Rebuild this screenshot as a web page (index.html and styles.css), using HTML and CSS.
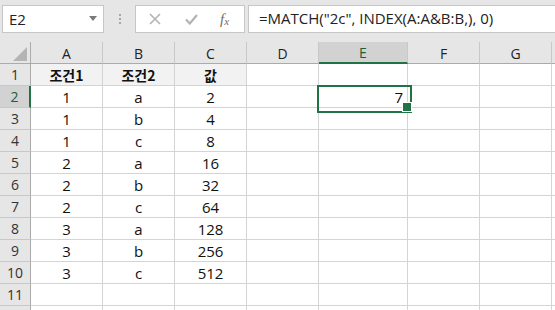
FILE: index.html
```html
<!DOCTYPE html>
<html lang="ko">
<head>
<meta charset="utf-8">
<link rel="stylesheet" href="styles.css">
</head>
<body>
<div class="app">
  <div class="toolbar">
    <div class="namebox">
      <span class="name">E2</span>
      <svg class="caret" width="8" height="5" viewBox="0 0 8 5"><path d="M0 0H8L4 5Z" fill="#7a7a7a"/></svg>
    </div>
    <div class="grip"><i></i><i></i><i></i></div>
    <div class="fxbox">
      <svg class="ico" width="12" height="12" viewBox="0 0 12 12"><path d="M1 1L11 11M11 1L1 11" stroke="#b3b3b3" stroke-width="1.6" fill="none"/></svg>
      <svg class="ico" width="13" height="11" viewBox="0 0 13 11"><path d="M1 5.5L4.8 9.5L12 1" stroke="#b3b3b3" stroke-width="2.2" fill="none"/></svg>
      <span class="fx">f<sub>x</sub></span>
    </div>
    <div class="formula">=MATCH("2c", INDEX(A:A&amp;B:B,), 0)</div>
  </div>
  <div class="sheet">
    <div class="corner"><svg width="14" height="14" viewBox="0 0 14 14"><path d="M14 0V14H0Z" fill="#b4b4b4"/></svg></div>
    <div class="ch">A</div><div class="ch">B</div><div class="ch">C</div><div class="ch">D</div><div class="ch sel">E</div><div class="ch">F</div><div class="ch">G</div><div class="ch"></div>

    <div class="rh">1</div><div class="c hd">조건1</div><div class="c hd">조건2</div><div class="c hd">값</div><div class="c"></div><div class="c"></div><div class="c"></div><div class="c"></div><div class="c"></div>
    <div class="rh sel">2</div><div class="c">1</div><div class="c">a</div><div class="c">2</div><div class="c"></div><div class="c act"><span class="num">7</span></div><div class="c"></div><div class="c"></div><div class="c"></div>
    <div class="rh">3</div><div class="c">1</div><div class="c">b</div><div class="c">4</div><div class="c"></div><div class="c"></div><div class="c"></div><div class="c"></div><div class="c"></div>
    <div class="rh">4</div><div class="c">1</div><div class="c">c</div><div class="c">8</div><div class="c"></div><div class="c"></div><div class="c"></div><div class="c"></div><div class="c"></div>
    <div class="rh">5</div><div class="c">2</div><div class="c">a</div><div class="c">16</div><div class="c"></div><div class="c"></div><div class="c"></div><div class="c"></div><div class="c"></div>
    <div class="rh">6</div><div class="c">2</div><div class="c">b</div><div class="c">32</div><div class="c"></div><div class="c"></div><div class="c"></div><div class="c"></div><div class="c"></div>
    <div class="rh">7</div><div class="c">2</div><div class="c">c</div><div class="c">64</div><div class="c"></div><div class="c"></div><div class="c"></div><div class="c"></div><div class="c"></div>
    <div class="rh">8</div><div class="c">3</div><div class="c">a</div><div class="c">128</div><div class="c"></div><div class="c"></div><div class="c"></div><div class="c"></div><div class="c"></div>
    <div class="rh">9</div><div class="c">3</div><div class="c">b</div><div class="c">256</div><div class="c"></div><div class="c"></div><div class="c"></div><div class="c"></div><div class="c"></div>
    <div class="rh">10</div><div class="c">3</div><div class="c">c</div><div class="c">512</div><div class="c"></div><div class="c"></div><div class="c"></div><div class="c"></div><div class="c"></div>
    <div class="rh">11</div><div class="c"></div><div class="c"></div><div class="c"></div><div class="c"></div><div class="c"></div><div class="c"></div><div class="c"></div><div class="c"></div>
    <div class="rh"></div><div class="c"></div><div class="c"></div><div class="c"></div><div class="c"></div><div class="c"></div><div class="c"></div><div class="c"></div><div class="c"></div>
  </div>
</div>
</body>
</html>
```

FILE: styles.css
```css
* { box-sizing: border-box; }
html, body { margin: 0; padding: 0; background: #ffffff; }
body { width: 555px; height: 310px; overflow: hidden; }
.app {
  width: 555px; height: 310px; overflow: hidden;
  font-family: "Open Sans", "Noto Sans CJK KR", sans-serif;
  color: #222;
}
.toolbar {
  height: 42px; background: #e6e6e6;
  display: flex; align-items: flex-start;
  padding: 5px 0 0 2px;
}
.namebox {
  width: 102px; height: 28px; background: #fff;
  border: 1px solid #c6c6c6;
  display: flex; align-items: center; justify-content: space-between;
  padding: 0 6px 0 6px;
  font-size: 15px; color: #222;
}
.caret { margin-top: -2px; }
.grip {
  width: 31px; height: 28px;
  display: flex; flex-direction: column; align-items: center; justify-content: center; gap: 2px;
  padding-left: 1px;
}
.grip i { display: block; width: 2px; height: 2px; background: #a8a8a8; }
.fxbox {
  width: 110px; height: 28px; background: #fff;
  border: 1px solid #c6c6c6;
  display: flex; align-items: center;
  padding-left: 13px; gap: 24px;
}
.fx {
  font-family: "Liberation Serif", serif; font-style: italic; font-size: 15px; color: #6e6e6e;
  margin-left: -2px;
}
.fx sub { font-size: 11px; vertical-align: -1px; }
.formula {
  flex: 1 0 auto; height: 28px; margin-left: 3px; margin-right: -4px;
  background: #fff; border: 1px solid #c6c6c6;
  padding-left: 10px;
  font-size: 15px; line-height: 25px; color: #222; white-space: nowrap;
}
.sheet {
  display: grid;
  grid-template-columns: 31px 72px 72px 72px 72px 89px 72px 72px 40px;
  grid-auto-rows: 22px;
}
.corner {
  background: #e6e6e6;
  border-right: 1px solid #ababab; border-bottom: 1px solid #ababab;
  display: flex; align-items: flex-end; justify-content: flex-end;
  padding: 0 3px 2px 0;
}
.ch {
  background: #e6e6e6;
  border-bottom: 1px solid #ababab;
  border-right: 1px solid #c8c8c8;
  display: flex; align-items: center; justify-content: center;
  font-size: 14px; color: #222; padding-top: 1px;
}
.ch.sel { background: #d2d2d2; border-bottom: 2px solid #217346; color: #1e5c39; }
.rh {
  background: #e6e6e6;
  border-right: 1px solid #ababab;
  border-bottom: 1px solid #c8c8c8;
  display: flex; align-items: center; justify-content: center;
  font-size: 14px; color: #333;
}
.rh.sel { background: #d2d2d2; border-right: 2px solid #217346; color: #1e5c39; }
.c {
  border-right: 1px solid #d4d4d4;
  border-bottom: 1px solid #d4d4d4;
  display: flex; align-items: center; justify-content: center;
  font-size: 15px; color: #111;
}
.c.hd { background: #f2f2f2; font-weight: 700; font-family: "Noto Sans CJK KR", "Open Sans", sans-serif; font-size: 14px; }
.c.act { position: relative; justify-content: flex-end; padding-right: 4px; }
.c.act::after {
  content: ""; position: absolute;
  left: -2px; top: -1px; width: 91px; height: 24px;
  border: 2px solid #217346;
}
.c.act::before {
  content: ""; position: absolute;
  right: -5px; bottom: -5px; width: 8px; height: 8px;
  background: #217346; border: 1px solid #fff; z-index: 2;
}
```
